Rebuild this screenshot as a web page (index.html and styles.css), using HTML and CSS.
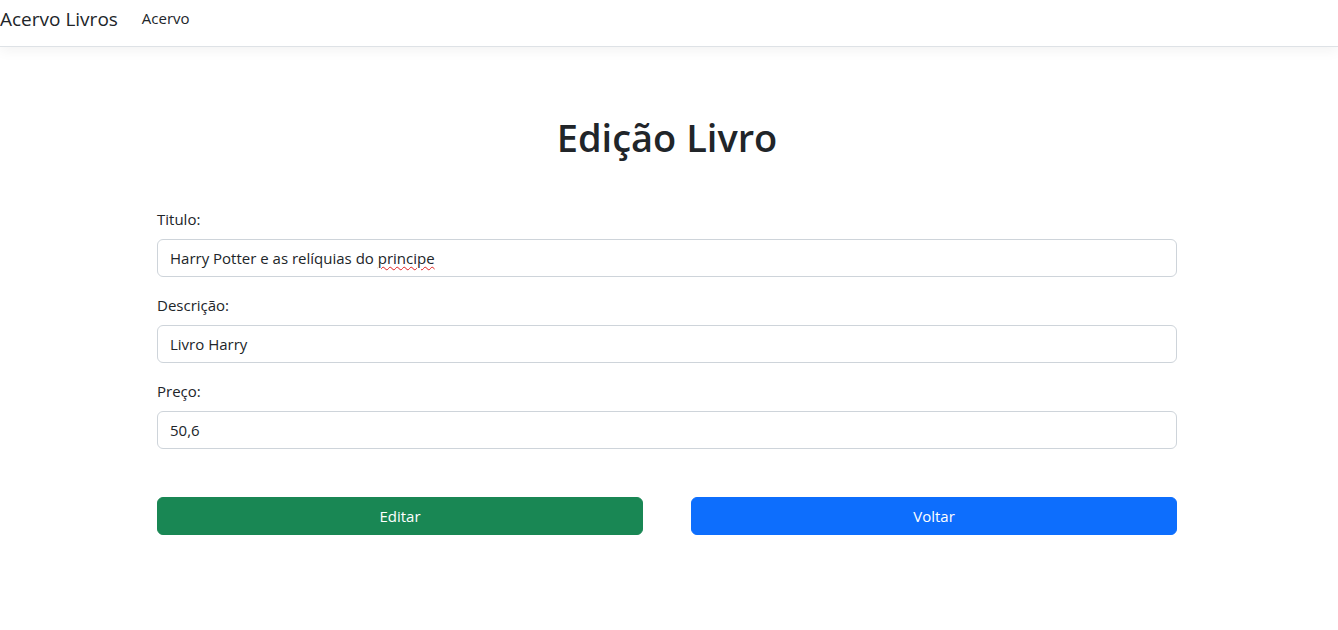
FILE: index.html
```html
<!DOCTYPE html>
<html lang="pt-BR">
<head>
<meta charset="utf-8">
<title>Edição Livro</title>
<link rel="stylesheet" href="styles.css">
</head>
<body>
<header class="navbar">
  <a class="brand" href="#">Acervo Livros</a>
  <nav class="nav">
    <a class="nav-link" href="#">Acervo</a>
  </nav>
</header>
<div class="page">
<main class="container">
  <h1 class="title">Edição Livro</h1>
  <form class="form">
    <div class="group">
      <label class="label" for="titulo">Titulo:</label>
      <div class="form-control" id="titulo">Harry Potter e as relíquias do <span class="misspelled">principe</span></div>
    </div>
    <div class="group">
      <label class="label" for="descricao">Descrição:</label>
      <input class="form-control" id="descricao" type="text" value="Livro Harry">
    </div>
    <div class="group">
      <label class="label" for="preco">Preço:</label>
      <input class="form-control" id="preco" type="text" value="50,6">
    </div>
    <div class="actions">
      <button class="btn btn-success" type="button">Editar</button>
      <button class="btn btn-primary" type="button">Voltar</button>
    </div>
  </form>
</main>
</div>
</body>
</html>
```
FILE: styles.css
```css
* { box-sizing: border-box; }
html, body {
  margin: 0;
  padding: 0;
  background: #fff;
  color: #212529;
  font-family: "Open Sans", "Noto Sans", sans-serif;
  font-size: 15px;
  line-height: 1.5;
}
.navbar {
  display: flex;
  align-items: center;
  height: 47px;
  border-bottom: 1px solid #dee2e6;
  box-shadow: 0 4px 12px rgba(0,0,0,0.05);
  padding: 0;
}
.brand {
  font-size: 19px;
  color: #212529;
  text-decoration: none;
  margin-right: 24px;
  margin-top: -7px;
}
.nav { display: flex; }
.nav-link {
  font-size: 15px;
  color: #212529;
  text-decoration: none;
  margin-top: -10px;
}
.page { padding-right: 4px; }
.container {
  width: 1020px;
  margin: 0 auto;
  padding-top: 66px;
}
.title {
  margin: 0 0 46px 0;
  text-align: center;
  font-size: 38px;
  font-weight: 600;
  line-height: 48px;
}
.form { display: flex; flex-direction: column; }
.group { display: flex; flex-direction: column; margin-bottom: 16px; }
.label { display: block; margin-bottom: 8px; line-height: 24px; }
.form-control {
  display: block;
  width: 100%;
  height: 38px;
  padding: 0 12px;
  font-family: inherit;
  font-size: 15px;
  line-height: 36px;
  color: #212529;
  background: #fff;
  border: 1px solid #ced4da;
  border-radius: 6px;
  outline: none;
}
.misspelled {
  text-decoration: underline wavy #e02020;
  text-decoration-thickness: 1px;
  text-underline-offset: 2px;
}
.actions {
  display: grid;
  grid-template-columns: 1fr 1fr;
  column-gap: 48px;
  margin-top: 32px;
}
.btn {
  height: 38px;
  border: 1px solid transparent;
  border-radius: 6px;
  font-family: inherit;
  font-size: 15px;
  color: #fff;
  cursor: pointer;
}
.btn-success { background: #198754; border-color: #198754; }
.btn-primary { background: #0d6efd; border-color: #0d6efd; }
```
